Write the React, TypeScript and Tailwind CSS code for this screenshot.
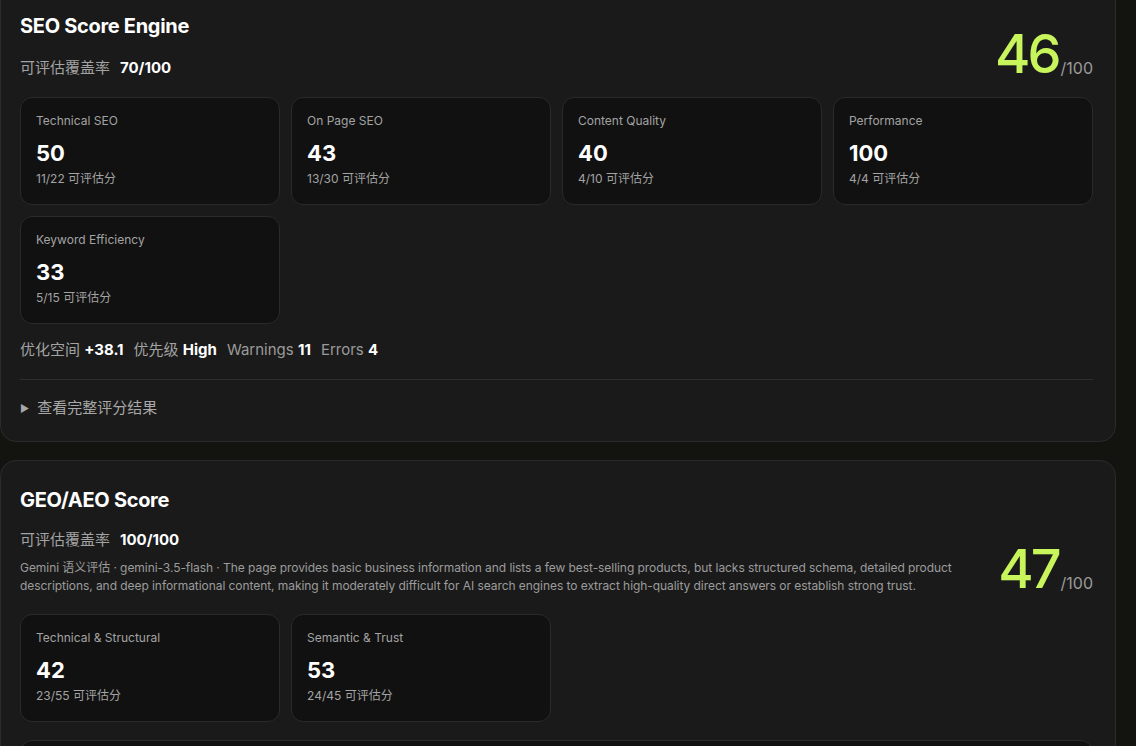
import React from 'react';

type Metric = {
  label: string;
  value: number;
  detail: string;
};

const seoMetrics: Metric[] = [
  { label: 'Technical SEO', value: 50, detail: '11/22 可评估分' },
  { label: 'On Page SEO', value: 43, detail: '13/30 可评估分' },
  { label: 'Content Quality', value: 40, detail: '4/10 可评估分' },
  { label: 'Performance', value: 100, detail: '4/4 可评估分' },
  { label: 'Keyword Efficiency', value: 33, detail: '5/15 可评估分' },
];

const geoMetrics: Metric[] = [
  { label: 'Technical & Structural', value: 42, detail: '23/55 可评估分' },
  { label: 'Semantic & Trust', value: 53, detail: '24/45 可评估分' },
];

const MetricCard: React.FC<{ metric: Metric }> = ({ metric }) => (
  <div className="h-[108px] rounded-xl border border-[#2a2a2a] bg-[#111111] px-[15px] pt-[15px]">
    <div className="text-[12px] leading-4 text-[#a3a3a3]">{metric.label}</div>
    <div className="mt-[10px] text-[22px] font-bold leading-7 text-white">{metric.value}</div>
    <div className="mt-[4px] text-[12px] leading-4 text-[#a3a3a3]">{metric.detail}</div>
  </div>
);

const BigScore: React.FC<{ value: number }> = ({ value }) => (
  <div className="flex shrink-0 items-end">
    <span className="text-[54px] font-medium leading-[46px] tracking-[-3px] text-[#c8f55c]">{value}</span>
    <span className="mb-[-1px] ml-[2px] text-[16px] leading-5 text-[#9a9a9a]">/100</span>
  </div>
);

const Coverage: React.FC<{ value: string }> = ({ value }) => (
  <div className="flex items-center gap-[10px] text-[15px] leading-5">
    <span className="text-[#a3a3a3]">可评估覆盖率</span>
    <span className="font-bold text-white">{value}</span>
  </div>
);

export default function App() {
  return (
    <div
      className="min-h-screen w-full bg-[#131410] pr-5 text-white"
      style={{ fontFamily: 'Inter, "Noto Sans CJK SC", sans-serif' }}
    >
      <div className="h-[746px] overflow-hidden">
        {/* SEO card */}
        <div className="mt-[-20px] rounded-2xl border border-[#2b2b2b] bg-[#1a1a1a] pb-[23px] pl-[19px] pr-[22px] pt-[31px]">
          <div className="flex items-end justify-between">
            <div>
              <h2 className="text-[20px] font-bold leading-7 tracking-[-0.3px]">SEO Score Engine</h2>
              <div className="mt-[18px]">
                <Coverage value="70/100" />
              </div>
            </div>
            <div className="mb-[1px]">
              <BigScore value={46} />
            </div>
          </div>

          <div className="mt-[19px] grid grid-cols-4 gap-[11px]">
            {seoMetrics.map((m) => (
              <MetricCard key={m.label} metric={m} />
            ))}
          </div>

          <div className="mt-[16px] flex items-center gap-[10px] text-[15px] leading-5">
            <span className="text-[#a3a3a3]">
              优化空间 <span className="font-bold text-white">+38.1</span>
            </span>
            <span className="text-[#a3a3a3]">
              优先级 <span className="font-bold text-white">High</span>
            </span>
            <span className="text-[#9a9a9a]">
              Warnings <span className="font-bold text-white">11</span>
            </span>
            <span className="text-[#9a9a9a]">
              Errors <span className="font-bold text-white">4</span>
            </span>
          </div>

          <div className="mt-[19px] border-t border-[#2e2e2e]" />

          <div className="mt-[18px] flex items-center gap-[8px] text-[15px] leading-5 text-[#a8a8a8]">
            <span className="text-[10px]">▶</span>
            <span>查看完整评分结果</span>
          </div>
        </div>

        {/* GEO card */}
        <div className="mt-[18px] rounded-2xl border border-[#2b2b2b] bg-[#1a1a1a] pb-6 pl-[19px] pr-[22px] pt-[25px]">
          <div className="flex items-end justify-between gap-8">
            <div className="flex-1">
              <h2 className="text-[20px] font-bold leading-7 tracking-[-0.3px]">GEO/AEO Score</h2>
              <div className="mt-[16px]">
                <Coverage value="100/100" />
              </div>
              <p className="mt-[9px] text-[12px] leading-[18px] tracking-[-0.06px] text-[#9c9c9c]">
                Gemini 语义评估 · gemini-3.5-flash · The page provides basic business information and lists a few best-selling products, but lacks structured schema, detailed product descriptions, and deep informational content, making it moderately difficult for AI search engines to extract high-quality direct answers or establish strong trust.
              </p>
            </div>
            <div className="mb-[3px]">
              <BigScore value={47} />
            </div>
          </div>

          <div className="mt-[19px] grid grid-cols-4 gap-[11px]">
            {geoMetrics.map((m) => (
              <MetricCard key={m.label} metric={m} />
            ))}
          </div>

          <div className="mt-[18px] h-24 rounded-xl border border-[#2a2a2a] bg-[#111111]" />
        </div>
      </div>
    </div>
  );
}
